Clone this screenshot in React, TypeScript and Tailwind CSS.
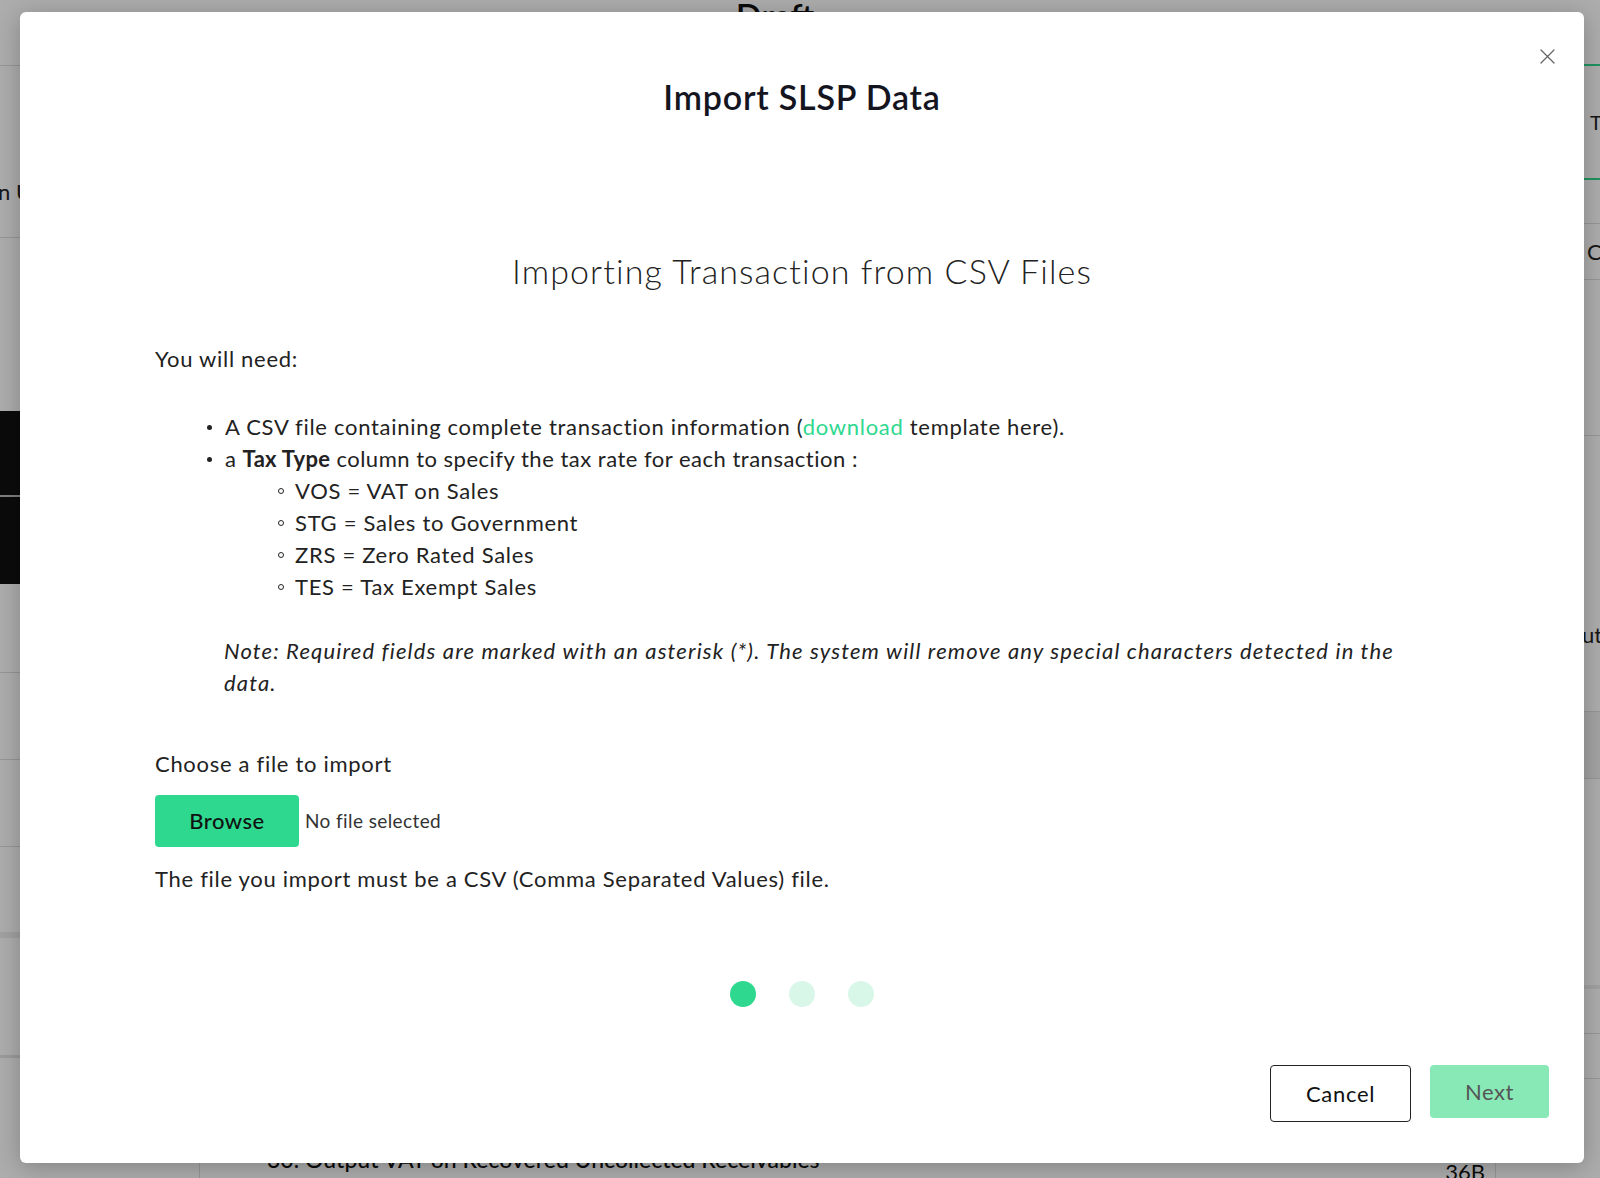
import React from "react";

function BgPage() {
  return (
    <div className="absolute inset-0 flex bg-white text-[#222]">
      {/* left column */}
      <div className="w-[200px] flex flex-col">
        <div className="h-[66px] border-b border-[#ddd]" />
        <div className="h-[172px] border-b border-[#ddd] flex items-end pb-[32px]">
          <span className="text-[22px] leading-[27px] -ml-[2px] whitespace-nowrap">n Update</span>
        </div>
        <div className="h-[173px]" />
        <div className="h-[86px] bg-[#111] border-b-2 border-[#bbb]" />
        <div className="h-[87px] bg-[#111]" />
        <div className="h-[89px] border-b border-[#ddd]" />
        <div className="h-[87px] border-b border-[#ddd]" />
        <div className="h-[87px] border-b border-[#ddd]" />
        <div className="h-[91px] border-b-[6px] border-[#eee]" />
        <div className="h-[120px] border-b-[3px] border-[#e5e5e5]" />
        <div className="flex-1 border-r border-[#ddd]" />
      </div>
      {/* middle */}
      <div className="flex-1 flex flex-col">
        <div className="h-[60px] flex justify-center">
          <span className="text-[34px] leading-[40px] font-semibold -mt-[4px] ml-[-190px] text-[#111]">Draft</span>
        </div>
        <div className="flex-1" />
        <div className="h-[60px] flex items-start">
          <span className="ml-[67px] mt-[27px] text-[23px] leading-[28px] font-medium text-[#111] whitespace-nowrap">
            30. Output VAT on Recovered Uncollected Receivables
          </span>
          <span className="ml-auto mr-[44px] mt-[40px] text-[22px] leading-[28px] text-[#111] pr-[10px] border-r border-[#ddd] h-[40px]">
            36B
          </span>
        </div>
      </div>
      {/* right column */}
      <div className="w-[60px] flex flex-col">
        <div className="h-[66px] border-b-2 border-[#2ed88f]" />
        <div className="h-[114px] border-b-2 border-[#2ed88f] flex items-center">
          <span className="text-[20px] ml-[50px] text-[#222]">T</span>
        </div>
        <div className="h-[44px] border-b border-[#ddd]" />
        <div className="h-[56px] border-b border-[#ddd] flex items-center">
          <span className="text-[22px] ml-[47px] text-[#222]">Ca</span>
        </div>
        <div className="h-[156px] border-b border-[#ddd]" />
        <div className="h-[215px] flex items-end pb-[3px]">
          <span className="text-[22px] leading-[27px] ml-[42px] text-[#222]">ut</span>
        </div>
        <div className="h-[60px]" />
        <div className="h-[68px] bg-[#f1f1f1] border-y border-[#ddd]" />
        <div className="h-[210px] border-b-[4px] border-[#eee]" />
        <div className="h-[45px] border-b border-[#ddd]" />
        <div className="h-[45px] border-b border-[#ddd]" />
        <div className="flex-1" />
      </div>
    </div>
  );
}

export default function App() {
  return (
    <div className="relative w-[1600px] h-[1178px] overflow-hidden font-[Lato,sans-serif]">
      <BgPage />
      <div className="absolute inset-0 bg-black/[0.32]" />
      <div className="absolute left-[20px] top-[12px] w-[1564px] h-[1151px] bg-white rounded-[6px] shadow-[0_4px_24px_rgba(0,0,0,0.25)] flex flex-col px-[135px] pt-[65px] text-[#222]">
        <button className="absolute right-[29px] top-[36px] w-[16px] h-[16px] flex items-center justify-center">
          <svg width="15" height="15" viewBox="0 0 15 15" fill="none" stroke="#666" strokeWidth="1.3" strokeLinecap="round">
            <path d="M1 1L14 14M14 1L1 14" />
          </svg>
        </button>
        <h1 className="text-center text-[34px] leading-[40px] font-semibold tracking-[0.8px] text-[#15151f]">Import SLSP Data</h1>
        <h2 className="mt-[132px] text-center text-[34px] leading-[44px] font-light tracking-[1.1px] text-[#222]">
          Importing Transaction from CSV Files
        </h2>
        <div className="text-[22px] leading-[32px] tracking-[0.7px] flex flex-col">
          <p className="mt-[50px]">You will need:</p>
          <div className="mt-[36px] flex flex-col">
            <div className="flex items-center pl-[52px]">
              <span className="w-[5px] h-[5px] rounded-full bg-[#222] mr-[13px]" />
              <span>
                A CSV file containing complete transaction information (<span className="text-[#2ed88f]">download</span> template
                here).
              </span>
            </div>
            <div className="flex items-center pl-[52px]">
              <span className="w-[5px] h-[5px] rounded-full bg-[#222] mr-[13px]" />
              <span className="tracking-[0.5px]">
                a <span className="font-bold tracking-[0.3px]">Tax Type</span> column to specify the tax rate for each transaction :
              </span>
            </div>
            {["VOS = VAT on Sales", "STG = Sales to Government", "ZRS = Zero Rated Sales", "TES = Tax Exempt Sales"].map((t) => (
              <div key={t} className="flex items-center pl-[123px]">
                <span className="w-[6px] h-[6px] rounded-full border border-[#222] mr-[11px]" />
                <span>{t}</span>
              </div>
            ))}
          </div>
          <p className="mt-[32px] pl-[69px] pr-[20px] italic tracking-[1.15px]">
            Note: Required fields are marked with an asterisk (*). The system will remove any special characters detected in the data.
          </p>
          <p className="mt-[49px]">Choose a file to import</p>
          <div className="mt-[15px] flex items-center">
            <button className="w-[144px] h-[52px] rounded-[4px] bg-[#2ed88f] text-[22px] font-medium tracking-[0.5px] text-[#111] flex items-center justify-center">
              Browse
            </button>
            <span className="ml-[6px] text-[19px] tracking-[0.4px] text-[#333]">No file selected</span>
          </div>
          <p className="mt-[16px]">The file you import must be a CSV (Comma Separated Values) file.</p>
        </div>
        <div className="mt-[86px] flex justify-center gap-[33px]">
          <span className="w-[26px] h-[26px] rounded-full bg-[#2ed88f]" />
          <span className="w-[26px] h-[26px] rounded-full bg-[#d9f7e9]" />
          <span className="w-[26px] h-[26px] rounded-full bg-[#d9f7e9]" />
        </div>
        <div className="mt-[58px] -mr-[100px] flex justify-end items-start gap-[19px]">
          <button className="w-[141px] h-[57px] rounded-[4px] border-[1.5px] border-[#222] text-[22px] tracking-[0.7px] text-[#111] flex items-center justify-center">
            Cancel
          </button>
          <button className="w-[119px] h-[53px] rounded-[4px] bg-[#88e9b6] text-[22px] tracking-[0.5px] text-[#555] flex items-center justify-center">
            Next
          </button>
        </div>
      </div>
    </div>
  );
}
